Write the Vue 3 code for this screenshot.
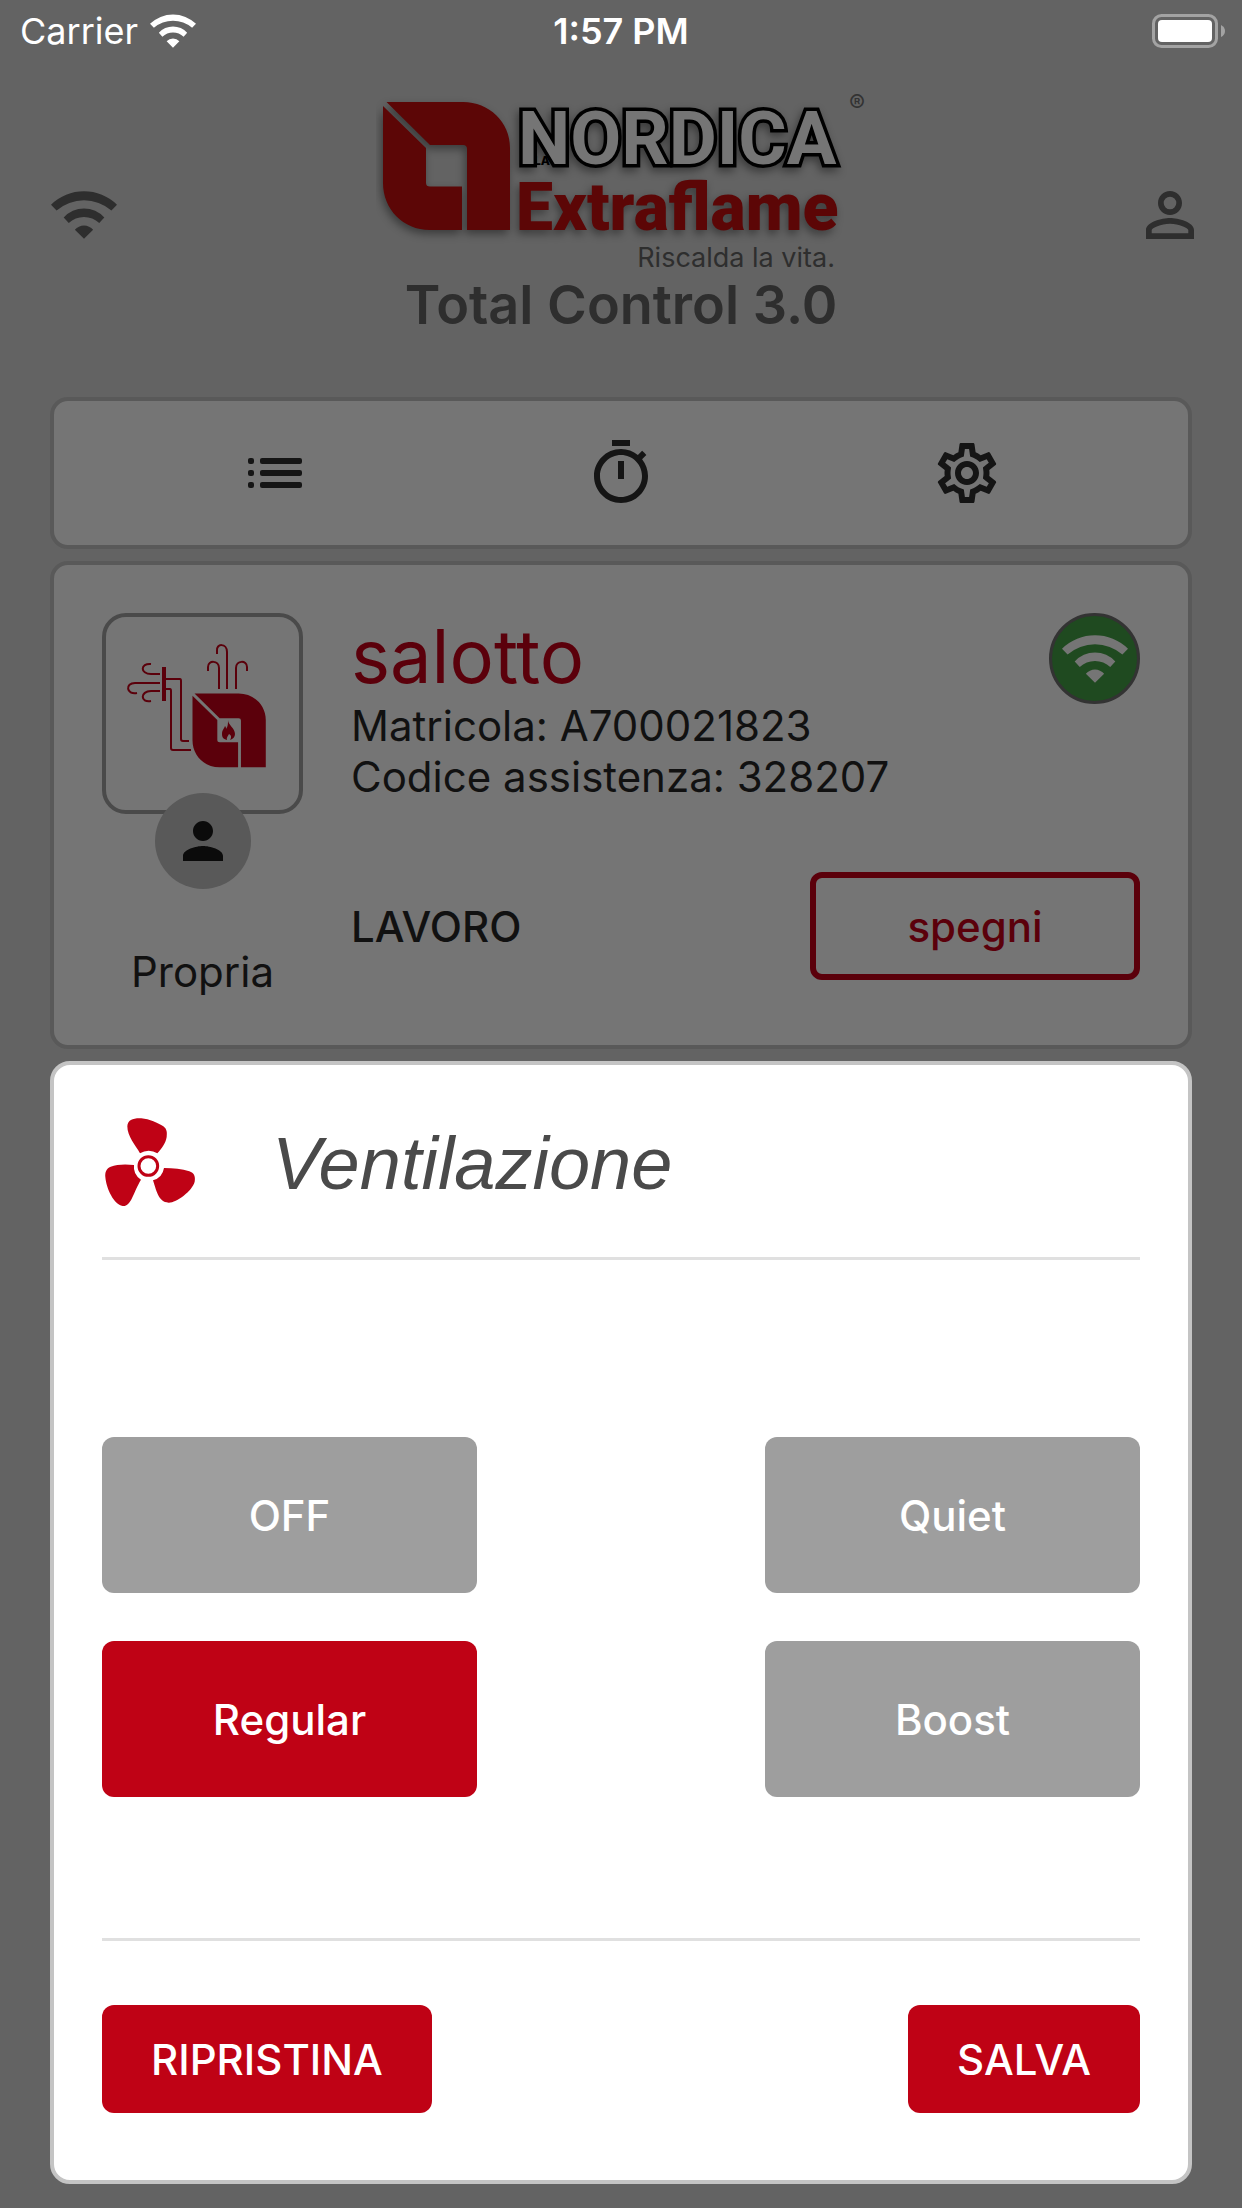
<template>
  <div class="page">
    <div class="status-bar">
      <div class="carrier">
        <span>Carrier</span>
        <svg class="status-wifi" viewBox="0 0 65 47"><path :d="wifiPath" /></svg>
      </div>
      <span class="clock">1:57 PM</span>
      <svg class="battery" viewBox="0 0 74 34">
        <rect x="1.5" y="1.5" width="63" height="31" rx="8" fill="none" stroke="#a3a3a3" stroke-width="3" />
        <rect x="6" y="6" width="54" height="22" rx="4" fill="#fff" />
        <path d="M69 11Q73 13 73 17T69 23z" fill="#a3a3a3" />
      </svg>
    </div>

    <header class="header">
      <button class="icon-btn wide" aria-label="Wi-Fi">
        <svg class="wifi" viewBox="0 0 65 47"><path :d="wifiPath" /></svg>
      </button>
      <div class="brand">
        <svg class="logo" viewBox="0 0 490 180">
          <g class="logo-shadow">
            <path class="logo-red" transform="translate(7 10)" :d="markPath" />
            <text class="nordica" x="142" y="72">NORDICA</text>
            <text class="extraflame" x="140" y="138">Extraflame</text>
          </g>
          <text class="la" x="158" y="73">LA</text>
          <text class="reg" x="473" y="20">®</text>
          <text class="slogan" x="459" y="175">Riscalda la vita.</text>
        </svg>
        <h1>Total Control 3.0</h1>
      </div>
      <button class="icon-btn" aria-label="Account">
        <svg class="icon" viewBox="0 0 24 24">
          <path d="M12 5.9a2.1 2.1 0 1 1 0 4.2 2.1 2.1 0 0 1 0-4.2m0 9c2.97 0 6.1 1.46 6.1 2.1v1.1H5.9V17c0-.64 3.13-2.1 6.1-2.1M12 4C9.79 4 8 5.79 8 8s1.79 4 4 4 4-1.79 4-4-1.79-4-4-4zm0 9c-2.67 0-8 1.34-8 4v3h16v-3c0-2.66-5.33-4-8-4z" />
        </svg>
      </button>
    </header>

    <nav class="card toolbar">
      <button v-for="tool in tools" :key="tool.label" class="icon-btn" :aria-label="tool.label">
        <svg class="icon" viewBox="0 0 24 24"><path :d="tool.path" /></svg>
      </button>
    </nav>

    <section class="card device">
      <div class="owner">
        <div class="avatar">
          <svg viewBox="0 0 193 193">
            <g fill="none" stroke="#5b000b" stroke-width="2">
              <path d="M113 72V51C113 43 102 43 102 50V54" />
              <path d="M121 72V35C121 26 110 26 111 34V37" />
              <path d="M130 72V51C130 43 141 43 141 50V54" />
              <path d="M54 57H45C34 57 34 46 45 47" />
              <path d="M54 66H29C19 66 20 78 31 76" />
              <path d="M54 74H45C34 74 34 86 45 84" />
              <path d="M60 62H74Q75 62 75 64V122Q75 124 77 124H83" />
              <path d="M60 72H64Q65 72 65 74V131Q65 133 67 133H85" />
            </g>
            <path fill="#5b000b" d="M56 50h4v34h-4z" />
            <path fill="#5b000b" transform="translate(86.5 76.5) scale(.577)" :d="markPath" />
            <path fill="#5b000b" d="M122 103c0 5 7 8 7 14 0 3-2 5-5 6 2-3 1-5-1-6-1 2-3 4-2 6-4-1-5-3-5-6 0-4 2-5 3-8 1 1 1 2 1 3 2-3 2-5 2-9z" />
          </svg>
        </div>
        <div class="badge">
          <svg viewBox="0 0 24 24">
            <path d="M12 12c2.21 0 4-1.79 4-4s-1.79-4-4-4-4 1.79-4 4 1.79 4 4 4zm0 2c-2.67 0-8 1.34-8 4v2h16v-2c0-2.66-5.33-4-8-4z" />
          </svg>
        </div>
        <span class="owner-name">Propria</span>
      </div>
      <div class="info">
        <div class="info-top">
          <div>
            <h2>salotto</h2>
            <p>Matricola: A700021823</p>
            <p>Codice assistenza: 328207</p>
          </div>
          <div class="online">
            <svg class="wifi" viewBox="0 0 65 47"><path :d="wifiPath" /></svg>
          </div>
        </div>
        <div class="info-bottom">
          <span class="state">LAVORO</span>
          <button class="power-btn">spegni</button>
        </div>
      </div>
    </section>

    <section class="dialog">
      <div class="dialog-header">
        <svg class="fan" viewBox="0 0 288 288">
          <path d="M114 115C100 90 76 64 76 34C77 14 94 9 118 10C142 12 168 24 184 34C196 43 195 54 194 66C191 84 180 100 166 115A46 46 0 0 0 114 115z" />
          <path d="M96 150C70 147 44 148 26 155C12 161 9 172 10 186C13 222 36 268 62 273C88 275 94 232 117 194A46 46 0 0 1 96 150z" />
          <path d="M186 159C214 159 240 162 262 169C276 174 281 184 278 200C271 228 222 264 200 263C168 262 162 222 153 196A46 46 0 0 0 186 159z" />
          <circle cx="139" cy="153" r="28" />
        </svg>
        <h2>Ventilazione</h2>
      </div>
      <div class="modes">
        <button
          v-for="mode in modes"
          :key="mode"
          class="mode-btn"
          :class="{ active: mode === selected }"
          :aria-pressed="mode === selected"
          @click="selected = mode"
        >
          {{ mode }}
        </button>
      </div>
      <div class="dialog-footer">
        <button class="action-btn" @click="reset">RIPRISTINA</button>
        <button class="action-btn" @click="save">SALVA</button>
      </div>
    </section>
  </div>
</template>

<script setup>
import { ref } from 'vue'

const wifiPath =
  'M0 13.4A46.6 46.6 0 0 1 65 13.4L59.5 19A41.5 41.5 0 0 0 5.5 19z' +
  'M12.5 26A26.7 26.7 0 0 1 52.5 26L47.5 31.5A21.7 21.7 0 0 0 17.5 31.5z' +
  'M23.5 38A12 12 0 0 1 41.5 38L32.5 47z'

const markPath =
  'M3.5 0H80C106 0 127 20 127 46V128H84V47Q84 43 80 43H47z' +
  'M0 4L43 46V81Q43 84.5 47 84.5H79V128H47C20 128 0 107 0 81z'

const tools = [
  {
    label: 'Lista',
    path: 'M3.7 7h.6q.7 0 .7.7v.6q0 .7-.7.7h-.6Q3 9 3 8.3v-.6Q3 7 3.7 7zm0 4h.6q.7 0 .7.7v.6q0 .7-.7.7h-.6q-.7 0-.7-.7v-.6q0-.7.7-.7zm0 4h.6q.7 0 .7.7v.6q0 .7-.7.7h-.6q-.7 0-.7-.7v-.6q0-.7.7-.7zM7.7 7h12.6q.7 0 .7.7v.6q0 .7-.7.7H7.7Q7 9 7 8.3v-.6Q7 7 7.7 7zm0 4h12.6q.7 0 .7.7v.6q0 .7-.7.7H7.7q-.7 0-.7-.7v-.6q0-.7.7-.7zm0 4h12.6q.7 0 .7.7v.6q0 .7-.7.7H7.7q-.7 0-.7-.7v-.6q0-.7.7-.7z'
  },
  {
    label: 'Timer',
    path: 'M15 1H9v2h6V1zm-4 13h2V8h-2v6zm8.03-6.61l1.42-1.42c-.43-.51-.9-.99-1.41-1.41l-1.42 1.42C16.07 4.74 14.12 4 12 4c-4.97 0-9 4.03-9 9s4.02 9 9 9 9-4.03 9-9c0-2.12-.74-4.07-1.97-5.61zM12 20c-3.87 0-7-3.13-7-7s3.13-7 7-7 7 3.13 7 7-3.13 7-7 7z'
  },
  {
    label: 'Impostazioni',
    path: 'M19.43 12.98c.04-.32.07-.64.07-.98 0-.34-.03-.66-.07-.98l2.11-1.65c.19-.15.24-.42.12-.64l-2-3.46c-.09-.16-.26-.25-.44-.25-.06 0-.12.01-.17.03l-2.49 1c-.52-.4-1.08-.73-1.69-.98l-.38-2.65C14.46 2.18 14.25 2 14 2h-4c-.25 0-.46.18-.49.42l-.38 2.65c-.61.25-1.17.59-1.69.98l-2.49-1c-.06-.02-.12-.03-.18-.03-.17 0-.34.09-.43.25l-2 3.46c-.13.22-.07.49.12.64l2.11 1.65c-.04.32-.07.65-.07.98 0 .33.03.66.07.98l-2.11 1.65c-.19.15-.24.42-.12.64l2 3.46c.09.16.26.25.44.25.06 0 .12-.01.17-.03l2.49-1c.52.4 1.08.73 1.69.98l.38 2.65c.03.24.24.42.49.42h4c.25 0 .46-.18.49-.42l.38-2.65c.61-.25 1.17-.59 1.69-.98l2.49 1c.06.02.12.03.18.03.17 0 .34-.09.43-.25l2-3.46c.12-.22.07-.49-.12-.64l-2.11-1.65zm-1.98-1.71c.04.31.05.52.05.73 0 .21-.02.43-.05.73l-.14 1.13.89.7 1.08.84-.7 1.21-1.27-.51-1.04-.42-.9.68c-.43.32-.84.56-1.25.73l-1.06.43-.16 1.13-.2 1.35h-1.4l-.19-1.35-.16-1.13-1.06-.43c-.43-.18-.83-.41-1.23-.71l-.91-.7-1.06.43-1.27.51-.7-1.21 1.08-.84.89-.7-.14-1.13c-.03-.31-.05-.54-.05-.74s.02-.43.05-.73l.14-1.13-.89-.7-1.08-.84.7-1.21 1.27.51 1.04.42.9-.68c.43-.32.84-.56 1.25-.73l1.06-.43.16-1.13.2-1.35h1.39l.19 1.35.16 1.13 1.06.43c.43.18.83.41 1.23.71l.91.7 1.06-.43 1.27-.51.7 1.21-1.07.85-.89.7.14 1.13zM12 8c-2.21 0-4 1.79-4 4s1.79 4 4 4 4-1.79 4-4-1.79-4-4-4zm0 6c-1.1 0-2-.9-2-2s.9-2 2-2 2 .9 2 2-.9 2-2 2z'
  }
]

const modes = ['OFF', 'Quiet', 'Regular', 'Boost']
const saved = ref('Regular')
const selected = ref('Regular')

const reset = () => {
  selected.value = saved.value
}

const save = () => {
  saved.value = selected.value
}
</script>

<style>
body {
  margin: 0;
  background: #636363;
}
</style>

<style scoped>
.page {
  min-height: 100vh;
  box-sizing: border-box;
  padding-bottom: 24px;
  display: flex;
  flex-direction: column;
  background: #636363;
  color: #111;
  font-family: Inter, "Liberation Sans", sans-serif;
  font-size: 42px;
  line-height: 51px;
}

h1,
h2,
p {
  margin: 0;
  font-weight: 400;
}

button {
  font: inherit;
  font-weight: 500;
  padding: 0;
  border: none;
  background: none;
  cursor: pointer;
}

svg {
  display: block;
}

.status-bar {
  display: grid;
  grid-template-columns: 1fr auto 1fr;
  align-items: center;
  height: 62px;
  padding: 0 16px;
  color: #fff;
  font-size: 36px;
}

.carrier {
  display: flex;
  align-items: center;
  gap: 12px;
  padding-left: 4px;
}

.status-wifi {
  width: 46px;
  height: 34px;
  fill: #fff;
}

.clock {
  font-weight: 600;
}

.battery {
  width: 74px;
  height: 34px;
  justify-self: end;
}

.header {
  display: grid;
  grid-template-columns: 1fr auto 1fr;
  align-items: center;
  padding: 30px 36px 60px;
  fill: #2e2e2e;
}

.icon-btn {
  width: 72px;
  height: 72px;
  display: flex;
  align-items: center;
  justify-content: center;
  justify-self: end;
}

.icon-btn.wide {
  width: 96px;
  justify-self: start;
}

.icon {
  width: 72px;
  height: 72px;
}

.wifi {
  width: 66px;
  height: 48px;
}

.brand {
  text-align: center;
}

.logo {
  width: 490px;
  height: 180px;
}

.logo-shadow {
  filter: drop-shadow(-2px 4px 4px rgba(0, 0, 0, 0.4));
}

.logo-red {
  fill: #5c0606;
}

.nordica {
  font-family: Roboto, sans-serif;
  font-weight: 700;
  font-size: 74px;
  fill: #757575;
  stroke: #000;
  stroke-width: 7px;
  paint-order: stroke;
}

.extraflame {
  font-family: Roboto, sans-serif;
  font-weight: 900;
  font-size: 66px;
  fill: #5c0606;
}

.la {
  font-weight: 800;
  font-size: 12px;
  fill: #000;
}

.reg {
  font-size: 24px;
  fill: #333;
}

.slogan {
  font-size: 27px;
  text-anchor: end;
}

h1 {
  color: #2e2e2e;
  font-size: 54px;
  line-height: 65px;
  font-weight: 600;
}

.card {
  margin: 0 50px 12px;
  border: 4px solid #595959;
  border-radius: 18px;
  background: #757575;
}

.toolbar {
  display: grid;
  grid-template-columns: repeat(3, 1fr);
  align-items: center;
  padding: 36px 48px;
  fill: #151515;
}

.toolbar .icon-btn {
  justify-self: center;
}

.device {
  display: grid;
  grid-template-columns: auto 1fr;
  gap: 48px;
  padding: 48px;
}

.owner {
  display: flex;
  flex-direction: column;
  align-items: center;
}

.avatar {
  width: 193px;
  height: 193px;
  border: 4px solid #4a4a4a;
  border-radius: 24px;
}

.badge {
  position: relative;
  width: 96px;
  height: 96px;
  margin-top: -21px;
  border-radius: 50%;
  background: #595959;
  display: flex;
  align-items: center;
  justify-content: center;
}

.badge svg {
  width: 60px;
  height: 60px;
  fill: #0b0b0b;
}

.owner-name {
  margin-top: 57px;
}

.info-top,
.info-bottom {
  display: flex;
  justify-content: space-between;
}

.info h2 {
  color: #5b000b;
  font-size: 74px;
  line-height: 87px;
}

.online {
  box-sizing: border-box;
  width: 91px;
  height: 91px;
  border: 3px solid #333;
  border-radius: 50%;
  background: #1f4a20;
  fill: #757575;
  display: flex;
  align-items: center;
  justify-content: center;
}

.info-bottom {
  align-items: center;
  margin-top: 70px;
}

.state {
  font-weight: 500;
}

.power-btn {
  box-sizing: border-box;
  width: 330px;
  height: 108px;
  border: 6px solid #5b000b;
  border-radius: 12px;
  color: #5b000b;
}

.dialog {
  flex: 1;
  display: flex;
  flex-direction: column;
  margin: 0 50px;
  padding: 0 48px;
  border: 4px solid #c4c4c4;
  border-radius: 20px;
  background: #fff;
}

.dialog-header {
  display: flex;
  align-items: center;
  gap: 74px;
  padding: 50px 0 46px;
  border-bottom: 3px solid #e0e0e0;
}

.dialog-header h2 {
  color: #4a4a4a;
  font-family: "Liberation Sans", Arial, sans-serif;
  font-size: 74px;
  line-height: 87px;
  font-style: italic;
}

.fan {
  width: 96px;
  height: 96px;
  fill: #bf0215;
}

.fan circle {
  fill: none;
  stroke: #bf0215;
  stroke-width: 9;
}

.modes {
  flex: 1;
  display: grid;
  grid-template-columns: 375px 375px;
  justify-content: space-between;
  align-content: start;
  gap: 48px;
  padding: 177px 0 139px;
}

.mode-btn {
  height: 156px;
  border-radius: 12px;
  background: #9e9e9e;
  color: #fff;
}

.mode-btn.active {
  background: #bf0215;
}

.dialog-footer {
  display: flex;
  justify-content: space-between;
  padding: 64px 0 67px;
  border-top: 3px solid #e0e0e0;
}

.action-btn {
  height: 108px;
  padding: 0 49px;
  border-radius: 12px;
  background: #bf0215;
  color: #fff;
}
</style>
